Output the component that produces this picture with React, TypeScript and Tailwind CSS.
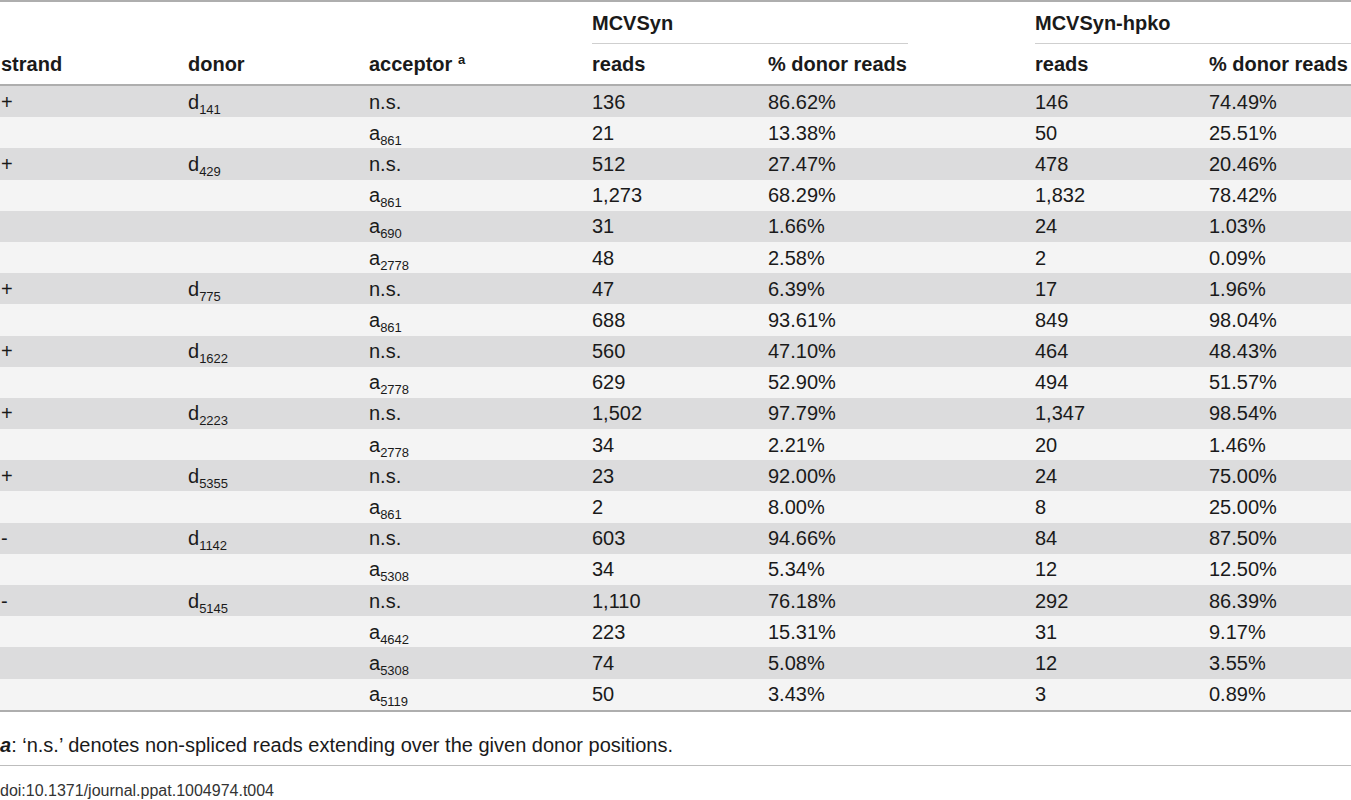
const cols = 'grid grid-cols-[188px_181px_223px_176px_267px_174px_142px]';

type Row = [string, string, string, string, string, string, string];

const rows: Row[] = [
  ['+', '141', 'n.s.', '136', '86.62%', '146', '74.49%'],
  ['', '', '861', '21', '13.38%', '50', '25.51%'],
  ['+', '429', 'n.s.', '512', '27.47%', '478', '20.46%'],
  ['', '', '861', '1,273', '68.29%', '1,832', '78.42%'],
  ['', '', '690', '31', '1.66%', '24', '1.03%'],
  ['', '', '2778', '48', '2.58%', '2', '0.09%'],
  ['+', '775', 'n.s.', '47', '6.39%', '17', '1.96%'],
  ['', '', '861', '688', '93.61%', '849', '98.04%'],
  ['+', '1622', 'n.s.', '560', '47.10%', '464', '48.43%'],
  ['', '', '2778', '629', '52.90%', '494', '51.57%'],
  ['+', '2223', 'n.s.', '1,502', '97.79%', '1,347', '98.54%'],
  ['', '', '2778', '34', '2.21%', '20', '1.46%'],
  ['+', '5355', 'n.s.', '23', '92.00%', '24', '75.00%'],
  ['', '', '861', '2', '8.00%', '8', '25.00%'],
  ['-', '1142', 'n.s.', '603', '94.66%', '84', '87.50%'],
  ['', '', '5308', '34', '5.34%', '12', '12.50%'],
  ['-', '5145', 'n.s.', '1,110', '76.18%', '292', '86.39%'],
  ['', '', '4642', '223', '15.31%', '31', '9.17%'],
  ['', '', '5308', '74', '5.08%', '12', '3.55%'],
  ['', '', '5119', '50', '3.43%', '3', '0.89%']
];

/** letter with a lowered position number, e.g. d141 */
function Pos({ letter, num }: { letter: string; num: string }) {
  return (
    <span>
      {letter}
      <sub className="bottom-[-5px] text-[13px]">{num}</sub>
    </span>
  );
}

export default function App() {
  return (
    <div className="w-[1351px] bg-white font-['Liberation_Sans',Arial,sans-serif] text-[20px] text-[#1a1a1a]">
      {/* header */}
      <div className="border-t-2 border-[#aeaeae] font-bold">
        <div className={`${cols} h-[42px]`}>
          <div className="col-span-3" />
          <div className="col-span-2">
            <div className="flex h-full w-[316px] items-center border-b border-[#cfcfcf] pt-[1px]">
              MCVSyn
            </div>
          </div>
          <div className="col-span-2">
            <div className="flex h-full w-[317px] items-center border-b border-[#cfcfcf] pt-[1px]">
              MCVSyn-hpko
            </div>
          </div>
        </div>
        <div className={`${cols} h-[42px] items-center border-b-2 border-[#aeaeae] pb-[1px]`}>
          <div className="pl-px">strand</div>
          <div>donor</div>
          <div>
            acceptor <sup className="text-[13px]">a</sup>
          </div>
          <div>reads</div>
          <div>% donor reads</div>
          <div>reads</div>
          <div>% donor reads</div>
        </div>
      </div>

      {/* body */}
      <div className="border-b-2 border-[#aeaeae]">
        {rows.map((r, i) => (
          <div
            key={i}
            className={`${cols} h-[31.2px] items-center ${
              i % 2 === 0 ? 'bg-[#dcdcdd]' : 'bg-[#f4f4f4]'
            }`}
          >
            <div className="pl-px">{r[0]}</div>
            <div>{r[1] && <Pos letter="d" num={r[1]} />}</div>
            <div>{r[2] === 'n.s.' ? 'n.s.' : <Pos letter="a" num={r[2]} />}</div>
            <div>{r[3]}</div>
            <div>{r[4]}</div>
            <div>{r[5]}</div>
            <div>{r[6]}</div>
          </div>
        ))}
      </div>

      {/* footnotes */}
      <div className="border-b border-[#bdbdbd] pt-[21px] pb-[8px] leading-[24px]">
        <span className="font-bold italic">a</span>: ‘n.s.’ denotes non-spliced reads
        extending over the given donor positions.
      </div>
      <div className="pt-[15px] text-[16px] leading-[20px] text-[#333]">
        doi:10.1371/journal.ppat.1004974.t004
      </div>
    </div>
  );
}
